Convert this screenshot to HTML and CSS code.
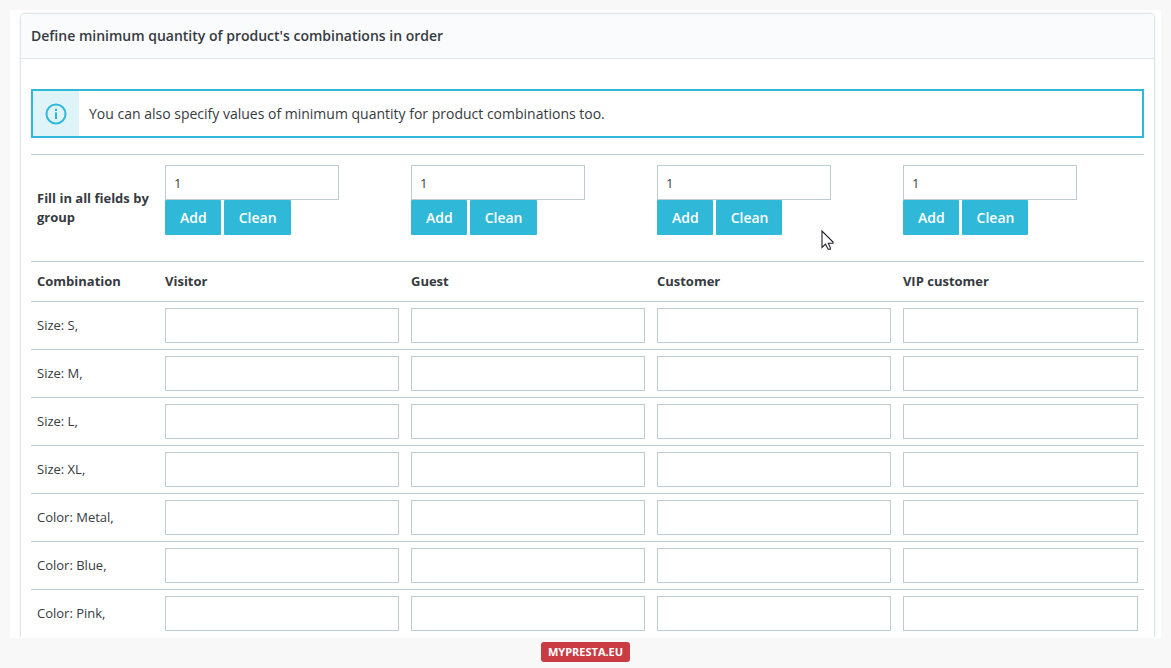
FILE: index.html
```html
<!DOCTYPE html>
<html lang="en">
<head>
<meta charset="utf-8">
<title>Minimum quantity of combinations</title>
<link rel="stylesheet" href="styles.css">
</head>
<body>
<main class="frame">
  <section class="card">
    <h1 class="card-header">Define minimum quantity of product's combinations in order</h1>
    <div class="card-body">
      <div class="alert">
        <div class="alert-icon">
          <svg width="22" height="22" viewBox="0 0 22 22" fill="none" stroke="#30b8d8" aria-hidden="true"><circle cx="11" cy="11" r="9.5" stroke-width="2"/><path d="M11 9.3V16M11 5.8v2.1" stroke-width="2"/></svg>
        </div>
        <p class="alert-text">You can also specify values of minimum quantity for product combinations too.</p>
      </div>
      <table class="grid">
        <colgroup><col class="col-name"><col class="col-group"><col class="col-group"><col class="col-group"><col></colgroup>
        <tbody>
        <tr class="fill-row">
          <th scope="row">Fill in all fields by group</th>
          <td><input class="field field-short" type="text" value="1" aria-label="Visitor quantity"><div class="actions"><button class="btn" type="button">Add</button><button class="btn" type="button">Clean</button></div></td>
          <td><input class="field field-short" type="text" value="1" aria-label="Guest quantity"><div class="actions"><button class="btn" type="button">Add</button><button class="btn" type="button">Clean</button></div></td>
          <td><input class="field field-short" type="text" value="1" aria-label="Customer quantity"><div class="actions"><button class="btn" type="button">Add</button><button class="btn" type="button">Clean</button></div></td>
          <td><input class="field field-short" type="text" value="1" aria-label="VIP customer quantity"><div class="actions"><button class="btn" type="button">Add</button><button class="btn" type="button">Clean</button></div></td>
        </tr>
        <tr class="head-row"><th scope="col">Combination</th><th scope="col">Visitor</th><th scope="col">Guest</th><th scope="col">Customer</th><th scope="col">VIP customer</th></tr>
        <tr><td>Size: S,</td><td><input class="field" type="text" aria-label="Size S, Visitor"></td><td><input class="field" type="text" aria-label="Size S, Guest"></td><td><input class="field" type="text" aria-label="Size S, Customer"></td><td><input class="field" type="text" aria-label="Size S, VIP customer"></td></tr>
        <tr><td>Size: M,</td><td><input class="field" type="text" aria-label="Size M, Visitor"></td><td><input class="field" type="text" aria-label="Size M, Guest"></td><td><input class="field" type="text" aria-label="Size M, Customer"></td><td><input class="field" type="text" aria-label="Size M, VIP customer"></td></tr>
        <tr><td>Size: L,</td><td><input class="field" type="text" aria-label="Size L, Visitor"></td><td><input class="field" type="text" aria-label="Size L, Guest"></td><td><input class="field" type="text" aria-label="Size L, Customer"></td><td><input class="field" type="text" aria-label="Size L, VIP customer"></td></tr>
        <tr><td>Size: XL,</td><td><input class="field" type="text" aria-label="Size XL, Visitor"></td><td><input class="field" type="text" aria-label="Size XL, Guest"></td><td><input class="field" type="text" aria-label="Size XL, Customer"></td><td><input class="field" type="text" aria-label="Size XL, VIP customer"></td></tr>
        <tr><td>Color: Metal,</td><td><input class="field" type="text" aria-label="Color Metal, Visitor"></td><td><input class="field" type="text" aria-label="Color Metal, Guest"></td><td><input class="field" type="text" aria-label="Color Metal, Customer"></td><td><input class="field" type="text" aria-label="Color Metal, VIP customer"></td></tr>
        <tr><td>Color: Blue,</td><td><input class="field" type="text" aria-label="Color Blue, Visitor"></td><td><input class="field" type="text" aria-label="Color Blue, Guest"></td><td><input class="field" type="text" aria-label="Color Blue, Customer"></td><td><input class="field" type="text" aria-label="Color Blue, VIP customer"></td></tr>
        <tr><td>Color: Pink,</td><td><input class="field" type="text" aria-label="Color Pink, Visitor"></td><td><input class="field" type="text" aria-label="Color Pink, Guest"></td><td><input class="field" type="text" aria-label="Color Pink, Customer"></td><td><input class="field" type="text" aria-label="Color Pink, VIP customer"></td></tr>
        </tbody>
      </table>
    </div>
  </section>
</main>
<footer class="footer"><span class="brand">MYPRESTA.EU</span></footer>
<svg class="cursor" width="14" height="21" viewBox="0 0 14 21" aria-hidden="true"><path d="M1 1V17.5L4.5 14.2L7.2 19.3H9.3V17.5L7.3 13.2H12V12Z" fill="#fff" stroke="#1c1c2c" stroke-width="1.1"/></svg>
</body>
</html>
```
FILE: styles.css
```css
* { box-sizing: border-box; }
body {
  margin: 0;
  padding: 10px 10px 0;
  background: #f8f8f8;
  color: #363a41;
  font-family: "Open Sans", "Noto Sans", sans-serif;
  font-size: 13px;
  line-height: 19px;
}
.frame { background: #fff; padding: 3px 6px 1px 10px; }
.card {
  border: 1px solid #dbe6e9;
  border-bottom: 0;
  border-radius: 5px 5px 0 0;
  box-shadow: 0 0 4px rgba(0, 0, 0, 0.06);
  clip-path: inset(-4px -4px 0);
}
.card-header {
  margin: 0;
  padding: 12px 10px;
  background: #fafbfc;
  border-bottom: 1px solid #dbe6e9;
  border-radius: 5px 5px 0 0;
  font-size: 14px;
  font-weight: 600;
  line-height: 20px;
}
.card-body { padding: 30px 10px 0; }
.alert {
  display: flex;
  margin-bottom: 16px;
  border: 2px solid #30b8d8;
}
.alert-icon {
  display: flex;
  align-items: center;
  justify-content: center;
  width: 46px;
  background: #dff4f9;
}
.alert-text {
  margin: 0;
  padding: 13px 10px 12px;
  font-size: 14px;
  line-height: 20px;
}
.grid {
  width: 100%;
  table-layout: fixed;
  border-collapse: separate;
  border-spacing: 0;
}
.col-name { width: 128px; }
.col-group { width: 22.1%; }
.grid th, .grid td {
  padding: 6px;
  border-top: 1px solid #bbcdd2;
  text-align: left;
  vertical-align: middle;
}
.grid th { font-weight: 700; }
.grid .fill-row td { padding: 10px 6px 26px; }
.grid .head-row th { padding: 10px 6px; }
.field {
  display: block;
  width: 100%;
  height: 35px;
  margin: 0;
  padding: 0 8px;
  border: 1px solid #bbcdd2;
  border-radius: 0;
  background: #fff;
  color: #363a41;
  font: inherit;
  outline: 0;
}
.field-short { width: 174px; }
.actions { display: flex; gap: 3px; }
.btn {
  height: 35px;
  margin: 0;
  padding: 0 14px 0 15px;
  border: 0;
  border-radius: 1px;
  background: #30b8d8;
  color: #fff;
  font: 600 14px/20px "Open Sans", "Noto Sans", sans-serif;
}
.footer { display: flex; justify-content: center; padding: 4px 0 6px; }
.brand {
  padding: 0 7px;
  border-radius: 3px;
  background: #c93c44;
  color: #fff;
  font-size: 11px;
  font-weight: 700;
  line-height: 20px;
}
.cursor { position: absolute; left: 821px; top: 230px; }
```
